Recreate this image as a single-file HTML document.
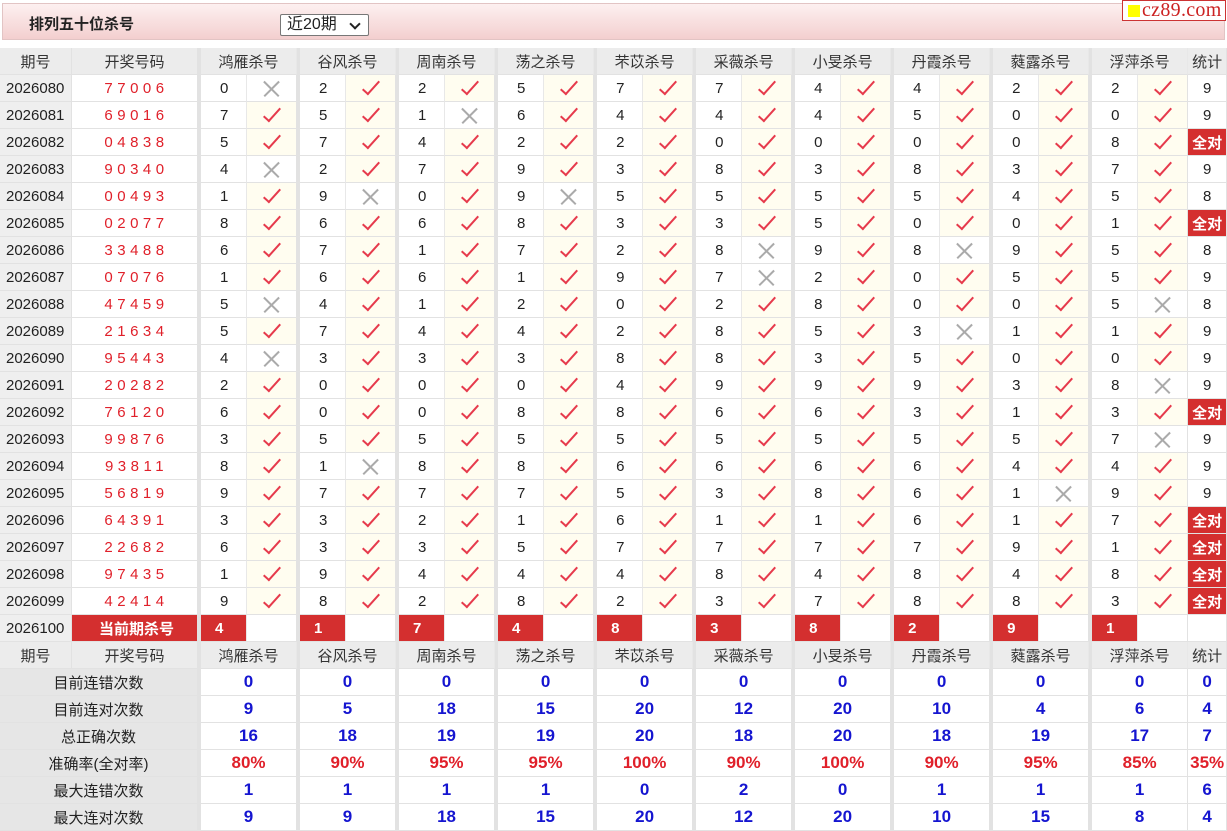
<!DOCTYPE html>
<html><head><meta charset="utf-8">
<style>
*{margin:0;padding:0;box-sizing:border-box}
body{width:1227px;height:829px;overflow:hidden;background:#fff;font-family:"Liberation Sans","Noto Sans CJK SC",sans-serif;color:#222;position:relative}
.top{position:absolute;left:2px;top:3px;width:1223px;height:37px;background:linear-gradient(#fdf0f0,#f3cfcf);border:1px solid #e2c4c4}
.top b{position:absolute;left:26px;top:9px;font-size:15px;color:#222}
.sel{position:absolute;left:277px;top:10px;width:89px;height:22px;border:1px solid #777;background:#fff;font-size:16px;padding-left:6px;line-height:20px;border-radius:2px}
.sel:after{content:"";position:absolute;right:9px;top:5px;width:6px;height:6px;border-right:2px solid #222;border-bottom:2px solid #222;transform:rotate(45deg)}
.logo{position:absolute;left:1122px;top:0;width:104px;height:21px;background:#fff;border:1px solid #c33;font-family:"Liberation Serif",serif;color:#c22;font-size:20px;line-height:18px;padding-left:19px;letter-spacing:0.3px}
.logo:before{content:"";position:absolute;left:5px;top:4px;width:12px;height:12px;background:#ff0}
table{position:absolute;left:0;top:48px;border-collapse:separate;border-spacing:0;table-layout:fixed;width:1227px}
td{height:27px;border-right:1px solid #e2e2e2;border-bottom:1px solid #e2e2e2;font-size:15px;text-align:center;white-space:nowrap;overflow:hidden;padding:0}
td.n{border-left:3px solid #e2e2e2;text-align:left;padding-left:19px;border-right:1px solid #e8e8e8}
td.q{background:#efefef;text-align:left;padding-left:6px}
td.k{color:#e0202a;letter-spacing:4.5px;padding-left:4px}
td.m{background:#fffdf0}
td.w{background:#fff}
tr.h td{background:#ececec;color:#333}
tr.h td.n{text-align:center;padding-left:0}
td.a{background:#d42f2f;color:#fff;font-weight:bold}
tr.c td.n{background:#d42f2f;color:#fff;font-weight:bold;padding-left:14px}
tr.c td.k{background:#d42f2f;color:#fff;font-weight:bold;letter-spacing:0}
tr.s td{font-weight:bold;color:#1515d0;font-size:17px}
tr.s td.l{background:#e6e6e6;color:#222;font-weight:normal;font-size:15px}
tr.s td.g{border-left:3px solid #e2e2e2}
tr.r td{color:#e0202a}
tr.r td.l{color:#222}
i.v{display:inline-block;width:8px;height:18px;border-right:2px solid #e63a4c;border-bottom:2px solid #e63a4c;transform:rotate(42deg);margin-top:-6px;vertical-align:middle}
i.x{display:inline-block;width:17px;height:17px;position:relative;vertical-align:middle}
i.x:before,i.x:after{content:"";position:absolute;left:-2px;top:8px;width:21px;height:1.5px;background:#aaa;transform:rotate(45deg)}
i.x:after{transform:rotate(-45deg)}
</style></head><body>
<div class="top"><b>排列五十位杀号</b><div class="sel">近20期</div></div>
<div class="logo">cz89.com</div>
<table>
<colgroup><col style="width:72px"><col style="width:126px"><col style="width:49px"><col style="width:50px"><col style="width:49px"><col style="width:50px"><col style="width:49px"><col style="width:50px"><col style="width:49px"><col style="width:50px"><col style="width:49px"><col style="width:50px"><col style="width:49px"><col style="width:50px"><col style="width:49px"><col style="width:50px"><col style="width:49px"><col style="width:50px"><col style="width:49px"><col style="width:50px"><col style="width:49px"><col style="width:50px"><col style="width:39px"></colgroup>
<tr class="h"><td>期号</td><td>开奖号码</td><td class="n" colspan="2">鸿雁杀号</td><td class="n" colspan="2">谷风杀号</td><td class="n" colspan="2">周南杀号</td><td class="n" colspan="2">荡之杀号</td><td class="n" colspan="2">芣苡杀号</td><td class="n" colspan="2">采薇杀号</td><td class="n" colspan="2">小旻杀号</td><td class="n" colspan="2">丹霞杀号</td><td class="n" colspan="2">蕤露杀号</td><td class="n" colspan="2">浮萍杀号</td><td>统计</td></tr>
<tr><td class="q">2026080</td><td class="k">77006</td><td class="n">0</td><td class="w"><i class="x"></i></td><td class="n">2</td><td class="m"><i class="v"></i></td><td class="n">2</td><td class="m"><i class="v"></i></td><td class="n">5</td><td class="m"><i class="v"></i></td><td class="n">7</td><td class="m"><i class="v"></i></td><td class="n">7</td><td class="m"><i class="v"></i></td><td class="n">4</td><td class="m"><i class="v"></i></td><td class="n">4</td><td class="m"><i class="v"></i></td><td class="n">2</td><td class="m"><i class="v"></i></td><td class="n">2</td><td class="m"><i class="v"></i></td><td>9</td></tr>
<tr><td class="q">2026081</td><td class="k">69016</td><td class="n">7</td><td class="m"><i class="v"></i></td><td class="n">5</td><td class="m"><i class="v"></i></td><td class="n">1</td><td class="w"><i class="x"></i></td><td class="n">6</td><td class="m"><i class="v"></i></td><td class="n">4</td><td class="m"><i class="v"></i></td><td class="n">4</td><td class="m"><i class="v"></i></td><td class="n">4</td><td class="m"><i class="v"></i></td><td class="n">5</td><td class="m"><i class="v"></i></td><td class="n">0</td><td class="m"><i class="v"></i></td><td class="n">0</td><td class="m"><i class="v"></i></td><td>9</td></tr>
<tr><td class="q">2026082</td><td class="k">04838</td><td class="n">5</td><td class="m"><i class="v"></i></td><td class="n">7</td><td class="m"><i class="v"></i></td><td class="n">4</td><td class="m"><i class="v"></i></td><td class="n">2</td><td class="m"><i class="v"></i></td><td class="n">2</td><td class="m"><i class="v"></i></td><td class="n">0</td><td class="m"><i class="v"></i></td><td class="n">0</td><td class="m"><i class="v"></i></td><td class="n">0</td><td class="m"><i class="v"></i></td><td class="n">0</td><td class="m"><i class="v"></i></td><td class="n">8</td><td class="m"><i class="v"></i></td><td class="a">全对</td></tr>
<tr><td class="q">2026083</td><td class="k">90340</td><td class="n">4</td><td class="w"><i class="x"></i></td><td class="n">2</td><td class="m"><i class="v"></i></td><td class="n">7</td><td class="m"><i class="v"></i></td><td class="n">9</td><td class="m"><i class="v"></i></td><td class="n">3</td><td class="m"><i class="v"></i></td><td class="n">8</td><td class="m"><i class="v"></i></td><td class="n">3</td><td class="m"><i class="v"></i></td><td class="n">8</td><td class="m"><i class="v"></i></td><td class="n">3</td><td class="m"><i class="v"></i></td><td class="n">7</td><td class="m"><i class="v"></i></td><td>9</td></tr>
<tr><td class="q">2026084</td><td class="k">00493</td><td class="n">1</td><td class="m"><i class="v"></i></td><td class="n">9</td><td class="w"><i class="x"></i></td><td class="n">0</td><td class="m"><i class="v"></i></td><td class="n">9</td><td class="w"><i class="x"></i></td><td class="n">5</td><td class="m"><i class="v"></i></td><td class="n">5</td><td class="m"><i class="v"></i></td><td class="n">5</td><td class="m"><i class="v"></i></td><td class="n">5</td><td class="m"><i class="v"></i></td><td class="n">4</td><td class="m"><i class="v"></i></td><td class="n">5</td><td class="m"><i class="v"></i></td><td>8</td></tr>
<tr><td class="q">2026085</td><td class="k">02077</td><td class="n">8</td><td class="m"><i class="v"></i></td><td class="n">6</td><td class="m"><i class="v"></i></td><td class="n">6</td><td class="m"><i class="v"></i></td><td class="n">8</td><td class="m"><i class="v"></i></td><td class="n">3</td><td class="m"><i class="v"></i></td><td class="n">3</td><td class="m"><i class="v"></i></td><td class="n">5</td><td class="m"><i class="v"></i></td><td class="n">0</td><td class="m"><i class="v"></i></td><td class="n">0</td><td class="m"><i class="v"></i></td><td class="n">1</td><td class="m"><i class="v"></i></td><td class="a">全对</td></tr>
<tr><td class="q">2026086</td><td class="k">33488</td><td class="n">6</td><td class="m"><i class="v"></i></td><td class="n">7</td><td class="m"><i class="v"></i></td><td class="n">1</td><td class="m"><i class="v"></i></td><td class="n">7</td><td class="m"><i class="v"></i></td><td class="n">2</td><td class="m"><i class="v"></i></td><td class="n">8</td><td class="w"><i class="x"></i></td><td class="n">9</td><td class="m"><i class="v"></i></td><td class="n">8</td><td class="w"><i class="x"></i></td><td class="n">9</td><td class="m"><i class="v"></i></td><td class="n">5</td><td class="m"><i class="v"></i></td><td>8</td></tr>
<tr><td class="q">2026087</td><td class="k">07076</td><td class="n">1</td><td class="m"><i class="v"></i></td><td class="n">6</td><td class="m"><i class="v"></i></td><td class="n">6</td><td class="m"><i class="v"></i></td><td class="n">1</td><td class="m"><i class="v"></i></td><td class="n">9</td><td class="m"><i class="v"></i></td><td class="n">7</td><td class="w"><i class="x"></i></td><td class="n">2</td><td class="m"><i class="v"></i></td><td class="n">0</td><td class="m"><i class="v"></i></td><td class="n">5</td><td class="m"><i class="v"></i></td><td class="n">5</td><td class="m"><i class="v"></i></td><td>9</td></tr>
<tr><td class="q">2026088</td><td class="k">47459</td><td class="n">5</td><td class="w"><i class="x"></i></td><td class="n">4</td><td class="m"><i class="v"></i></td><td class="n">1</td><td class="m"><i class="v"></i></td><td class="n">2</td><td class="m"><i class="v"></i></td><td class="n">0</td><td class="m"><i class="v"></i></td><td class="n">2</td><td class="m"><i class="v"></i></td><td class="n">8</td><td class="m"><i class="v"></i></td><td class="n">0</td><td class="m"><i class="v"></i></td><td class="n">0</td><td class="m"><i class="v"></i></td><td class="n">5</td><td class="w"><i class="x"></i></td><td>8</td></tr>
<tr><td class="q">2026089</td><td class="k">21634</td><td class="n">5</td><td class="m"><i class="v"></i></td><td class="n">7</td><td class="m"><i class="v"></i></td><td class="n">4</td><td class="m"><i class="v"></i></td><td class="n">4</td><td class="m"><i class="v"></i></td><td class="n">2</td><td class="m"><i class="v"></i></td><td class="n">8</td><td class="m"><i class="v"></i></td><td class="n">5</td><td class="m"><i class="v"></i></td><td class="n">3</td><td class="w"><i class="x"></i></td><td class="n">1</td><td class="m"><i class="v"></i></td><td class="n">1</td><td class="m"><i class="v"></i></td><td>9</td></tr>
<tr><td class="q">2026090</td><td class="k">95443</td><td class="n">4</td><td class="w"><i class="x"></i></td><td class="n">3</td><td class="m"><i class="v"></i></td><td class="n">3</td><td class="m"><i class="v"></i></td><td class="n">3</td><td class="m"><i class="v"></i></td><td class="n">8</td><td class="m"><i class="v"></i></td><td class="n">8</td><td class="m"><i class="v"></i></td><td class="n">3</td><td class="m"><i class="v"></i></td><td class="n">5</td><td class="m"><i class="v"></i></td><td class="n">0</td><td class="m"><i class="v"></i></td><td class="n">0</td><td class="m"><i class="v"></i></td><td>9</td></tr>
<tr><td class="q">2026091</td><td class="k">20282</td><td class="n">2</td><td class="m"><i class="v"></i></td><td class="n">0</td><td class="m"><i class="v"></i></td><td class="n">0</td><td class="m"><i class="v"></i></td><td class="n">0</td><td class="m"><i class="v"></i></td><td class="n">4</td><td class="m"><i class="v"></i></td><td class="n">9</td><td class="m"><i class="v"></i></td><td class="n">9</td><td class="m"><i class="v"></i></td><td class="n">9</td><td class="m"><i class="v"></i></td><td class="n">3</td><td class="m"><i class="v"></i></td><td class="n">8</td><td class="w"><i class="x"></i></td><td>9</td></tr>
<tr><td class="q">2026092</td><td class="k">76120</td><td class="n">6</td><td class="m"><i class="v"></i></td><td class="n">0</td><td class="m"><i class="v"></i></td><td class="n">0</td><td class="m"><i class="v"></i></td><td class="n">8</td><td class="m"><i class="v"></i></td><td class="n">8</td><td class="m"><i class="v"></i></td><td class="n">6</td><td class="m"><i class="v"></i></td><td class="n">6</td><td class="m"><i class="v"></i></td><td class="n">3</td><td class="m"><i class="v"></i></td><td class="n">1</td><td class="m"><i class="v"></i></td><td class="n">3</td><td class="m"><i class="v"></i></td><td class="a">全对</td></tr>
<tr><td class="q">2026093</td><td class="k">99876</td><td class="n">3</td><td class="m"><i class="v"></i></td><td class="n">5</td><td class="m"><i class="v"></i></td><td class="n">5</td><td class="m"><i class="v"></i></td><td class="n">5</td><td class="m"><i class="v"></i></td><td class="n">5</td><td class="m"><i class="v"></i></td><td class="n">5</td><td class="m"><i class="v"></i></td><td class="n">5</td><td class="m"><i class="v"></i></td><td class="n">5</td><td class="m"><i class="v"></i></td><td class="n">5</td><td class="m"><i class="v"></i></td><td class="n">7</td><td class="w"><i class="x"></i></td><td>9</td></tr>
<tr><td class="q">2026094</td><td class="k">93811</td><td class="n">8</td><td class="m"><i class="v"></i></td><td class="n">1</td><td class="w"><i class="x"></i></td><td class="n">8</td><td class="m"><i class="v"></i></td><td class="n">8</td><td class="m"><i class="v"></i></td><td class="n">6</td><td class="m"><i class="v"></i></td><td class="n">6</td><td class="m"><i class="v"></i></td><td class="n">6</td><td class="m"><i class="v"></i></td><td class="n">6</td><td class="m"><i class="v"></i></td><td class="n">4</td><td class="m"><i class="v"></i></td><td class="n">4</td><td class="m"><i class="v"></i></td><td>9</td></tr>
<tr><td class="q">2026095</td><td class="k">56819</td><td class="n">9</td><td class="m"><i class="v"></i></td><td class="n">7</td><td class="m"><i class="v"></i></td><td class="n">7</td><td class="m"><i class="v"></i></td><td class="n">7</td><td class="m"><i class="v"></i></td><td class="n">5</td><td class="m"><i class="v"></i></td><td class="n">3</td><td class="m"><i class="v"></i></td><td class="n">8</td><td class="m"><i class="v"></i></td><td class="n">6</td><td class="m"><i class="v"></i></td><td class="n">1</td><td class="w"><i class="x"></i></td><td class="n">9</td><td class="m"><i class="v"></i></td><td>9</td></tr>
<tr><td class="q">2026096</td><td class="k">64391</td><td class="n">3</td><td class="m"><i class="v"></i></td><td class="n">3</td><td class="m"><i class="v"></i></td><td class="n">2</td><td class="m"><i class="v"></i></td><td class="n">1</td><td class="m"><i class="v"></i></td><td class="n">6</td><td class="m"><i class="v"></i></td><td class="n">1</td><td class="m"><i class="v"></i></td><td class="n">1</td><td class="m"><i class="v"></i></td><td class="n">6</td><td class="m"><i class="v"></i></td><td class="n">1</td><td class="m"><i class="v"></i></td><td class="n">7</td><td class="m"><i class="v"></i></td><td class="a">全对</td></tr>
<tr><td class="q">2026097</td><td class="k">22682</td><td class="n">6</td><td class="m"><i class="v"></i></td><td class="n">3</td><td class="m"><i class="v"></i></td><td class="n">3</td><td class="m"><i class="v"></i></td><td class="n">5</td><td class="m"><i class="v"></i></td><td class="n">7</td><td class="m"><i class="v"></i></td><td class="n">7</td><td class="m"><i class="v"></i></td><td class="n">7</td><td class="m"><i class="v"></i></td><td class="n">7</td><td class="m"><i class="v"></i></td><td class="n">9</td><td class="m"><i class="v"></i></td><td class="n">1</td><td class="m"><i class="v"></i></td><td class="a">全对</td></tr>
<tr><td class="q">2026098</td><td class="k">97435</td><td class="n">1</td><td class="m"><i class="v"></i></td><td class="n">9</td><td class="m"><i class="v"></i></td><td class="n">4</td><td class="m"><i class="v"></i></td><td class="n">4</td><td class="m"><i class="v"></i></td><td class="n">4</td><td class="m"><i class="v"></i></td><td class="n">8</td><td class="m"><i class="v"></i></td><td class="n">4</td><td class="m"><i class="v"></i></td><td class="n">8</td><td class="m"><i class="v"></i></td><td class="n">4</td><td class="m"><i class="v"></i></td><td class="n">8</td><td class="m"><i class="v"></i></td><td class="a">全对</td></tr>
<tr><td class="q">2026099</td><td class="k">42414</td><td class="n">9</td><td class="m"><i class="v"></i></td><td class="n">8</td><td class="m"><i class="v"></i></td><td class="n">2</td><td class="m"><i class="v"></i></td><td class="n">8</td><td class="m"><i class="v"></i></td><td class="n">2</td><td class="m"><i class="v"></i></td><td class="n">3</td><td class="m"><i class="v"></i></td><td class="n">7</td><td class="m"><i class="v"></i></td><td class="n">8</td><td class="m"><i class="v"></i></td><td class="n">8</td><td class="m"><i class="v"></i></td><td class="n">3</td><td class="m"><i class="v"></i></td><td class="a">全对</td></tr>
<tr class="c"><td class="q">2026100</td><td class="k">当前期杀号</td><td class="n">4</td><td></td><td class="n">1</td><td></td><td class="n">7</td><td></td><td class="n">4</td><td></td><td class="n">8</td><td></td><td class="n">3</td><td></td><td class="n">8</td><td></td><td class="n">2</td><td></td><td class="n">9</td><td></td><td class="n">1</td><td></td><td></td></tr>
<tr class="h"><td>期号</td><td>开奖号码</td><td class="n" colspan="2">鸿雁杀号</td><td class="n" colspan="2">谷风杀号</td><td class="n" colspan="2">周南杀号</td><td class="n" colspan="2">荡之杀号</td><td class="n" colspan="2">芣苡杀号</td><td class="n" colspan="2">采薇杀号</td><td class="n" colspan="2">小旻杀号</td><td class="n" colspan="2">丹霞杀号</td><td class="n" colspan="2">蕤露杀号</td><td class="n" colspan="2">浮萍杀号</td><td>统计</td></tr>
<tr class="s"><td class="l" colspan="2">目前连错次数</td><td class="g" colspan="2">0</td><td class="g" colspan="2">0</td><td class="g" colspan="2">0</td><td class="g" colspan="2">0</td><td class="g" colspan="2">0</td><td class="g" colspan="2">0</td><td class="g" colspan="2">0</td><td class="g" colspan="2">0</td><td class="g" colspan="2">0</td><td class="g" colspan="2">0</td><td>0</td></tr>
<tr class="s"><td class="l" colspan="2">目前连对次数</td><td class="g" colspan="2">9</td><td class="g" colspan="2">5</td><td class="g" colspan="2">18</td><td class="g" colspan="2">15</td><td class="g" colspan="2">20</td><td class="g" colspan="2">12</td><td class="g" colspan="2">20</td><td class="g" colspan="2">10</td><td class="g" colspan="2">4</td><td class="g" colspan="2">6</td><td>4</td></tr>
<tr class="s"><td class="l" colspan="2">总正确次数</td><td class="g" colspan="2">16</td><td class="g" colspan="2">18</td><td class="g" colspan="2">19</td><td class="g" colspan="2">19</td><td class="g" colspan="2">20</td><td class="g" colspan="2">18</td><td class="g" colspan="2">20</td><td class="g" colspan="2">18</td><td class="g" colspan="2">19</td><td class="g" colspan="2">17</td><td>7</td></tr>
<tr class="s r"><td class="l" colspan="2">准确率(全对率)</td><td class="g" colspan="2">80%</td><td class="g" colspan="2">90%</td><td class="g" colspan="2">95%</td><td class="g" colspan="2">95%</td><td class="g" colspan="2">100%</td><td class="g" colspan="2">90%</td><td class="g" colspan="2">100%</td><td class="g" colspan="2">90%</td><td class="g" colspan="2">95%</td><td class="g" colspan="2">85%</td><td>35%</td></tr>
<tr class="s"><td class="l" colspan="2">最大连错次数</td><td class="g" colspan="2">1</td><td class="g" colspan="2">1</td><td class="g" colspan="2">1</td><td class="g" colspan="2">1</td><td class="g" colspan="2">0</td><td class="g" colspan="2">2</td><td class="g" colspan="2">0</td><td class="g" colspan="2">1</td><td class="g" colspan="2">1</td><td class="g" colspan="2">1</td><td>6</td></tr>
<tr class="s"><td class="l" colspan="2">最大连对次数</td><td class="g" colspan="2">9</td><td class="g" colspan="2">9</td><td class="g" colspan="2">18</td><td class="g" colspan="2">15</td><td class="g" colspan="2">20</td><td class="g" colspan="2">12</td><td class="g" colspan="2">20</td><td class="g" colspan="2">10</td><td class="g" colspan="2">15</td><td class="g" colspan="2">8</td><td>4</td></tr>
</table>
</body></html>
